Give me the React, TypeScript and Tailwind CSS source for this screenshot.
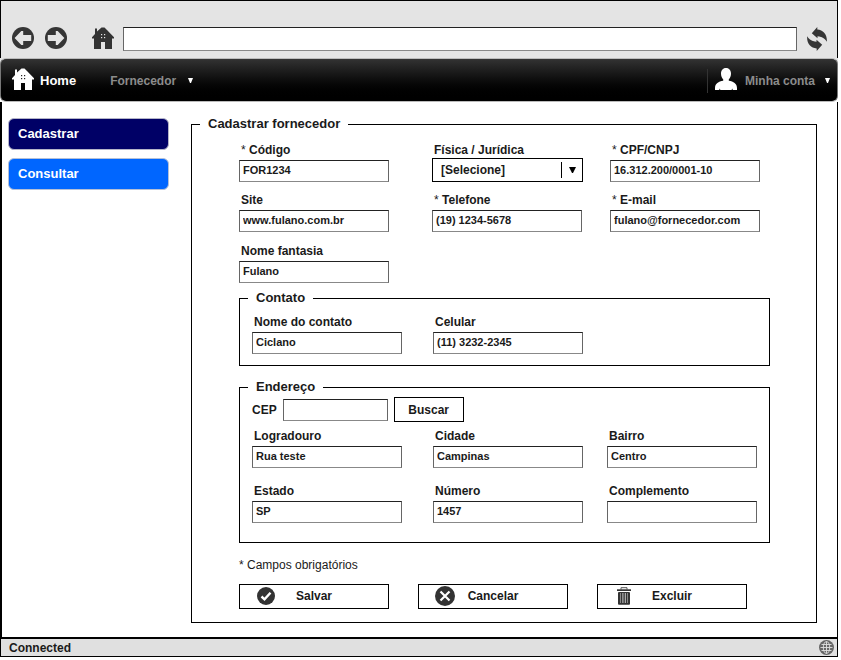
import React from "react";

function HouseIcon({ dots }: { dots: string }) {
  return (
    <svg width="22" height="22" viewBox="0 0 22 22" aria-hidden="true">
      <path
        d="M9.500 0.500h3L15 3l7 7.200v1.300h-2V22h-7v-7H9v7H2V11.500H0v-1.300L3 7V1.500h2V4.500z"
        fill="currentColor"
      />
      <g fill={dots}>
        <rect x="9" y="7" width="1.200" height="1.200" />
        <rect x="12" y="7" width="1.200" height="1.200" />
        <rect x="9" y="10" width="1.200" height="1.200" />
        <rect x="12" y="10" width="1.200" height="1.200" />
      </g>
    </svg>
  );
}

function ArrowIcon({ flip }: { flip?: boolean }) {
  return (
    <svg width="22" height="22" viewBox="0 0 22 22" aria-hidden="true">
      <circle cx="11" cy="11" r="11" fill="#353535" />
      <path
        d="M2.600 11L9.300 4H11.200V7.900H19.200V14H11.200V18H9.300z"
        fill="#e4e4e4"
        transform={flip ? "rotate(180 11 11)" : undefined}
      />
    </svg>
  );
}

function ReloadIcon() {
  const half = "M4.800 6.300L10.300 0V2.500C16.500 3 20.500 7.500 19.800 14.800C18.600 12.300 16 10.200 12.300 9.600L10.500 9.300V11.300z";
  return (
    <svg width="20" height="24" viewBox="0 0 20 24" fill="#353535" aria-hidden="true">
      <path d={half} />
      <path d={half} transform="rotate(180 10 12)" />
    </svg>
  );
}

function UserIcon() {
  return (
    <svg width="22" height="22" viewBox="0 0 22 22" fill="#fff" aria-hidden="true">
      <path d="M11 0C14.300 0 16 2.500 16 5.500C16 8 15.200 10 13.800 11.200V12.800C18.500 13.600 22 15.500 22 20V22H17.800L17.200 20.500L16.600 22H5.400L4.800 20.500L4.200 22H0V20C0 15.500 3.500 13.600 8.200 12.800V11.200C6.800 10 6 8 6 5.500C6 2.500 7.700 0 11 0z" />
    </svg>
  );
}

function CaretIcon() {
  return (
    <svg width="5" height="5" viewBox="0 0 5 5" fill="#fff" aria-hidden="true">
      <path d="M0 0H5L3 5H2z" />
    </svg>
  );
}

function CheckIcon() {
  return (
    <svg width="18" height="18" viewBox="0 0 18 18" aria-hidden="true">
      <circle cx="9" cy="9" r="9" fill="#333" />
      <path d="M4.500 9.500L7.500 12.300L13.500 5.800" fill="none" stroke="#fff" strokeWidth="2.400" />
    </svg>
  );
}

function CloseIcon() {
  return (
    <svg width="20" height="20" viewBox="0 0 20 20" aria-hidden="true">
      <circle cx="10" cy="10" r="10" fill="#333" />
      <path d="M5.500 5.500L14.500 14.500M14.500 5.500L5.500 14.500" stroke="#fff" strokeWidth="2.200" />
    </svg>
  );
}

function TrashIcon() {
  return (
    <svg width="14" height="18" viewBox="0 0 14 18" aria-hidden="true">
      <path d="M4 2.500V0.700H10V2.500" fill="none" stroke="#555" />
      <rect x="0" y="2.300" width="14" height="1.700" fill="#333" />
      <rect x="1" y="5" width="12" height="12.700" rx="1" fill="#333" />
      <path d="M3.500 6V16M10.500 6V16" stroke="#888" />
      <path d="M5.900 6V16M8.300 6V16" stroke="#ddd" strokeWidth="0.900" />
    </svg>
  );
}

function GlobeIcon() {
  return (
    <svg width="15" height="15" viewBox="0 0 15 15" aria-hidden="true">
      <circle cx="7.500" cy="7.500" r="7.500" fill="#666" />
      <g fill="none" stroke="#e0e0e0" strokeWidth="0.900">
        <path d="M7.500 1.500V13.500M1.500 7.500H13.500M2.500 4.500H12.500M2.500 10.500H12.500" />
        <ellipse cx="7.500" cy="7.500" rx="3.200" ry="6" />
      </g>
    </svg>
  );
}

const boxStyle =
  "h-[22px] border border-x-[#666] border-t-[#222] border-b-[#888] bg-white px-[3px] pb-0.5 text-[11px] font-bold text-[#1a1a1a] outline-none";

function FieldLabel({ id, text, required }: { id: string; text: string; required?: boolean }) {
  return (
    <label htmlFor={id} className="pl-0.5 leading-4">
      {required && <span className="font-normal">* </span>}
      {text}
    </label>
  );
}

type FieldProps = { id: string; label: string; value?: string; required?: boolean };

function Field({ id, label, value = "", required }: FieldProps) {
  return (
    <div className="flex min-w-0 flex-col gap-0.5">
      <FieldLabel id={id} text={label} required={required} />
      <input id={id} defaultValue={value} className={`${boxStyle} w-full max-w-[150px]`} />
    </div>
  );
}

function Group({ title, className, children }: { title: string; className: string; children: React.ReactNode }) {
  return (
    <fieldset className={`min-w-0 border border-black px-2 ${className}`}>
      <legend className="px-2 text-[13px] leading-4">{title}</legend>
      {children}
    </fieldset>
  );
}

function ActionButton({ icon, label }: { icon: React.ReactNode; label: string }) {
  return (
    <button
      type="button"
      className="grid h-[25px] w-[150px] grid-cols-[1fr_auto_1fr] items-center border border-black bg-white pb-px"
    >
      <span className="ml-4 flex w-5 justify-center">{icon}</span>
      {label}
    </button>
  );
}

export default function App() {
  return (
    <div className="mr-[3px] border border-black bg-white font-['Liberation_Sans',Arial,sans-serif] text-[12px] font-bold text-[#1a1a1a]">
      <header className="flex h-[57px] items-start bg-[#e4e4e4] pr-[10px] pl-[11px] pt-[26px]">
        <button type="button" aria-label="Voltar">
          <ArrowIcon />
        </button>
        <button type="button" aria-label="Avançar" className="ml-[11px]">
          <ArrowIcon flip />
        </button>
        <button type="button" aria-label="Página inicial" className="ml-[25px] text-[#333]">
          <HouseIcon dots="#e4e4e4" />
        </button>
        <input
          aria-label="Endereço da página"
          className="ml-[9px] h-6 min-w-0 flex-1 border border-x-[#666] border-t-[#222] border-b-[#888] bg-white px-1 outline-none"
        />
        <button type="button" aria-label="Recarregar" className="ml-[10px]">
          <ReloadIcon />
        </button>
      </header>

      <div className="-mx-px bg-linear-to-b from-[#e4e4e4] from-50% to-white to-50%">
        <nav className="flex h-11 items-center rounded-md border border-t-[#bbb] border-x-[#777] border-b-[#bbb] bg-linear-to-b from-[#333] to-black pt-px pr-[7px] pl-[11px] text-[#8c8c8c]">
          <a href="#home" className="flex items-center gap-1.5 text-[13px] text-white">
            <span className="pb-1">
              <HouseIcon dots="#222" />
            </span>
            Home
          </a>
          <button type="button" className="ml-[34px] flex items-center gap-3">
            Fornecedor
            <CaretIcon />
          </button>
          <span className="ml-auto h-6 w-px bg-[#333]" />
          <button type="button" className="ml-[7px] flex items-center gap-2">
            <span className="pb-1">
              <UserIcon />
            </span>
            Minha conta
            <span className="ml-0.5">
              <CaretIcon />
            </span>
          </button>
        </nav>
      </div>

      <div className="flex border-l border-black pr-5 pb-[14px] pl-[6px]">
        <aside className="flex w-[161px] shrink-0 flex-col gap-2 pt-4 text-[13px] text-white">
          <button type="button" className="h-8 rounded-md border border-[#b4b4c8] bg-[#000066] px-[9px] text-left">
            Cadastrar
          </button>
          <button type="button" className="h-8 rounded-md border border-[#b4c0d8] bg-[#0066ff] px-[9px] text-left">
            Consultar
          </button>
        </aside>

        <main className="min-w-0 flex-1 pt-[14px] pl-[22px]">
          <form>
            <Group title="Cadastrar fornecedor" className="pb-[13px]">
              <div className="pt-[10px] pr-[38px] pl-[39px]">
                <div className="grid grid-cols-[193fr_178fr_160fr] gap-y-2.5">
                  <Field id="codigo" label="Código" value="FOR1234" required />
                  <div className="flex min-w-0 flex-col">
                    <FieldLabel id="tipo" text="Física / Jurídica" />
                    <div className="relative max-w-[151px]">
                      <select
                        id="tipo"
                        className="h-6 w-full appearance-none border border-black bg-white pr-6 pb-px pl-2 outline-none"
                      >
                        <option>[Selecione]</option>
                        <option>Física</option>
                        <option>Jurídica</option>
                      </select>
                      <span className="pointer-events-none absolute inset-y-1 right-0 flex w-[22px] items-center justify-center border-l border-black">
                        <svg width="7" height="6" viewBox="0 0 7 6" aria-hidden="true">
                          <path d="M0 0H7L4 6H3z" />
                        </svg>
                      </span>
                    </div>
                  </div>
                  <Field id="documento" label="CPF/CNPJ" value="16.312.200/0001-10" required />
                  <Field id="site" label="Site" value="www.fulano.com.br" />
                  <Field id="telefone" label="Telefone" value="(19) 1234-5678" required />
                  <Field id="email" label="E-mail" value="fulano@fornecedor.com" required />
                </div>
                <div className="mt-[11px]">
                  <Field id="fantasia" label="Nome fantasia" value="Fulano" />
                </div>

                <Group title="Contato" className="mt-[7px] pb-[11px]">
                  <div className="grid grid-cols-[181fr_174fr_154fr] pt-2 pl-1">
                    <Field id="contato" label="Nome do contato" value="Ciclano" />
                    <Field id="celular" label="Celular" value="(11) 3232-2345" />
                  </div>
                </Group>

                <Group title="Endereço" className="mt-[13px] pb-[19px]">
                  <div className="flex items-center gap-1.5 pt-0.5 pl-1">
                    <label htmlFor="cep">CEP</label>
                    <input id="cep" className={`${boxStyle} w-[105px]`} />
                    <button type="button" className="h-[25px] w-[70px] border border-black bg-white">
                      Buscar
                    </button>
                  </div>
                  <div className="mt-1.5 grid grid-cols-[181fr_174fr_154fr] gap-y-[15px] pl-1">
                    <Field id="logradouro" label="Logradouro" value="Rua teste" />
                    <Field id="cidade" label="Cidade" value="Campinas" />
                    <Field id="bairro" label="Bairro" value="Centro" />
                    <Field id="estado" label="Estado" value="SP" />
                    <Field id="numero" label="Número" value="1457" />
                    <Field id="complemento" label="Complemento" />
                  </div>
                </Group>

                <p className="mt-[14px] leading-4 font-normal">* Campos obrigatórios</p>
                <div className="mt-[11px] flex flex-wrap gap-x-[29px] gap-y-2">
                  <ActionButton icon={<CheckIcon />} label="Salvar" />
                  <ActionButton icon={<CloseIcon />} label="Cancelar" />
                  <ActionButton icon={<TrashIcon />} label="Excluir" />
                </div>
              </div>
            </Group>
          </form>
        </main>
      </div>

      <footer className="flex h-[19px] items-center justify-between border-t-2 border-black bg-[#e0e0e0] pr-[3px] pl-2">
        <span>Connected</span>
        <GlobeIcon />
      </footer>
    </div>
  );
}
